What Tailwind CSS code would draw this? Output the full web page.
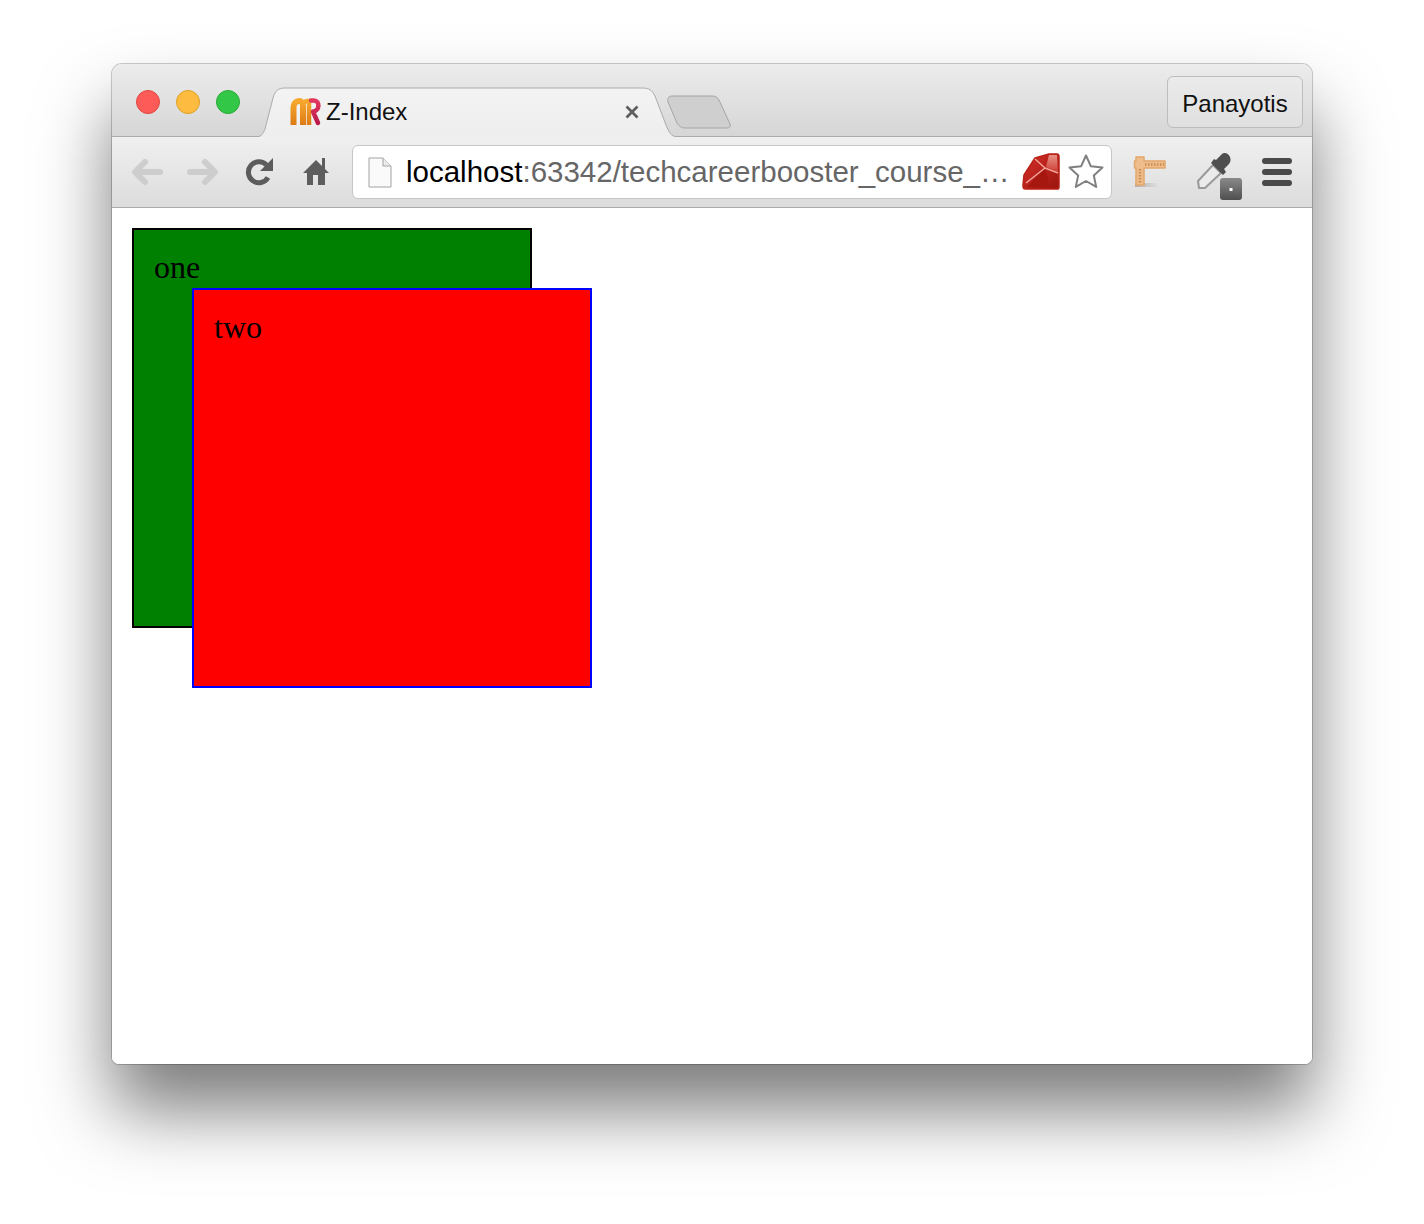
<!DOCTYPE html>
<html>
<head>
<meta charset="utf-8">
<title>Z-Index</title>
<script src="https://cdn.jsdelivr.net/npm/@tailwindcss/browser@4"></script>
</head>
<body class="bg-white">
<div class="w-[1424px] h-[1224px] pt-[64px] pl-[112px] overflow-hidden bg-white font-['Liberation_Sans',sans-serif]">
  <div class="w-[1200px] h-[1000px] flex flex-col rounded-t-[10px] rounded-b-[7px] bg-white shadow-[0_0_0_1px_rgba(0,0,0,0.2),0_46px_72px_rgba(0,0,0,0.52)]">
    <!-- tab strip -->
    <div class="relative h-[73px] shrink-0 flex items-end rounded-t-[10px] border-b border-[#ababab] bg-gradient-to-b from-[#ececec] to-[#d6d6d6]">
      <div class="w-[146px] h-full flex items-center gap-4 pl-6 pt-[4px] self-start">
        <span class="w-6 h-6 rounded-full bg-[#fc5b57] border border-[#e2463f]"></span>
        <span class="w-6 h-6 rounded-full bg-[#fdbb40] border border-[#dfa023]"></span>
        <span class="w-6 h-6 rounded-full bg-[#33c748] border border-[#27aa35]"></span>
      </div>
      <div class="relative w-[418px] h-[50px] -mb-px shrink-0 flex items-center">
        <svg class="absolute inset-0" width="418" height="50" viewBox="0 0 418 50">
          <defs><linearGradient id="tabg" x1="0" y1="0" x2="0" y2="1"><stop offset="0" stop-color="#f3f3f3"/><stop offset="1" stop-color="#eeeeee"/></linearGradient></defs>
          <path d="M0 49.500 C3 49.500 5 47 7 42 L15 11 C17 4 20 1 27 1 L384 1 C391 1 394 3 397 9 L408 38 C411 46 414 49.500 418 49.500 L418 50 L0 50 Z" fill="url(#tabg)"/>
          <path d="M0 49.500 C3 49.500 5 47 7 42 L15 11 C17 4 20 1 27 1 L384 1 C391 1 394 3 397 9 L408 38 C411 46 414 49.500 418 49.500" fill="none" stroke="#ababab" stroke-width="1"/>
        </svg>
        <!-- logo -->
        <svg class="relative ml-[32px] mt-[-1px] shrink-0" width="32" height="30" viewBox="0 0 32 30">
          <defs>
            <linearGradient id="mo" x1="0" y1="0" x2="0" y2="1"><stop offset="0" stop-color="#f6a92e"/><stop offset="1" stop-color="#dd7a14"/></linearGradient>
            <linearGradient id="mr" x1="0" y1="0" x2="0" y2="1"><stop offset="0" stop-color="#e2395e"/><stop offset="1" stop-color="#bb1a4a"/></linearGradient>
          </defs>
          <path d="M3.500 28 V11 C3.500 6 6 4 9 4 C12 4 13 6 13 10 V28" fill="none" stroke="url(#mo)" stroke-width="6"/>
          <path d="M13 10 C13 6 15 4 17.500 4 L19 4 V28" fill="none" stroke="url(#mo)" stroke-width="4.500"/>
          <path d="M21 3.500 H24 C30 3.500 30 14 23 14.500 L28 26" fill="none" stroke="url(#mr)" stroke-width="4.500" stroke-linecap="round" stroke-linejoin="round"/>
        </svg>
        <span class="relative ml-[4px] mt-[0px] text-[24px] leading-[28px] text-[#111]">Z-Index</span>
        <svg class="absolute left-[367px] top-[18px]" width="14" height="14" viewBox="0 0 14 14"><path d="M1.500 1.500 L12.500 12.500 M12.500 1.500 L1.500 12.500" stroke="#5f5f5f" stroke-width="2.800"/></svg>
      </div>
      <svg class="-ml-[10px] mb-[7px] shrink-0" width="66" height="34" viewBox="0 0 66 34">
        <path d="M6 1 H46 C50 1 52 3 53 5 L64 29 C65 32 63 33 61 33 H19 C15 33 13 31 11 28 L2 7 C1 3 3 1 6 1 Z" fill="#cfcfd0" stroke="#a6a6a6" stroke-width="1"/>
      </svg>
      <div class="ml-auto mr-[9px] mb-[8px] w-[136px] h-[52px] pt-[3px] rounded-[6px] border border-[#bdbdbd] bg-gradient-to-b from-[#ebebeb] to-[#e0e0e0] flex items-center justify-center text-[24px] text-[#111]">Panayotis</div>
    </div>
    <!-- toolbar -->
    <div class="h-[71px] shrink-0 flex items-center border-b border-[#ababab] bg-gradient-to-b from-[#f0f0f0] to-[#dcdcdc]">
      <svg class="ml-[18px] shrink-0" width="38" height="34" viewBox="0 0 38 34"><path d="M30 17 H7 M15 7 L5 17 L15 27" fill="none" stroke="#cdcdcd" stroke-width="6" stroke-linecap="round" stroke-linejoin="round"/></svg>
      <svg class="ml-[17px] shrink-0" width="38" height="34" viewBox="0 0 38 34"><path d="M5 17 H28 M20 7 L30 17 L20 27" fill="none" stroke="#cdcdcd" stroke-width="6" stroke-linecap="round" stroke-linejoin="round"/></svg>
      <svg class="ml-[21px] shrink-0" width="32" height="32" viewBox="0 0 32 32"><path d="M24 21.500 A10.500 10.500 0 1 1 22.500 9" fill="none" stroke="#5c5c5c" stroke-width="5"/><path d="M29 2 V15 H16 Z" fill="#5c5c5c"/></svg>
      <svg class="ml-[26px] shrink-0" width="30" height="30" viewBox="0 0 30 30"><path d="M14 3 L20 9 V1 H23 V12 L27 16 H23 V28 H16 V18 H11 V28 H5 V16 H1 Z" fill="#5d5d5d"/></svg>
      <!-- address bar -->
      <div class="ml-[20px] w-[760px] h-[54px] shrink-0 rounded-[6px] border border-[#c6c6c6] bg-white flex items-center">
        <svg class="ml-[15px] shrink-0" width="24" height="31" viewBox="0 0 24 31"><path d="M1 1 H15 L23 9 V30 H1 Z" fill="#fafafa" stroke="#a3a3a3"/><path d="M15 1 V9 H23" fill="#ebebeb" stroke="#a3a3a3"/></svg>
        <span class="ml-[14px] w-[604px] shrink-0 whitespace-nowrap text-[29.5px] leading-[34px] text-[#666]"><span class="text-black">localhost</span>:63342/techcareerbooster_course_…</span>
        <svg class="ml-[11px] shrink-0" width="40" height="40" viewBox="0 0 40 40">
          <defs>
            <linearGradient id="rb" x1="0" y1="0" x2="1" y2="1"><stop offset="0" stop-color="#d6302a"/><stop offset="1" stop-color="#9a150d"/></linearGradient>
            <linearGradient id="rh" x1="0" y1="0" x2="0" y2="1"><stop offset="0" stop-color="#f6b6ac"/><stop offset="1" stop-color="#d9483c"/></linearGradient>
          </defs>
          <path d="M14 6 L28 2 H36 C38 2 38 3 38 5 V34 C38 37 38 37 35 37 H5 C2 37 2 36 2 33 L3 23 Z" fill="url(#rb)" stroke="#b92118" stroke-width="1.500" stroke-linejoin="round"/>
          <path d="M28 3 L36 3 L37 20 L25 15 Z" fill="url(#rh)" opacity="0.75"/>
          <path d="M24 16 L29 36 L6 35 Z" fill="#a5170f"/>
          <path d="M24 16 L5 31 M14 7 L24 16 M24 16 L37 21" fill="none" stroke="#f3a49a" stroke-width="1.500"/>
        </svg>
        <svg class="ml-[6px] shrink-0" width="38" height="38" viewBox="0 0 38 38"><path d="M19 2.500 L23.800 13.200 L35.500 14.500 L26.800 22.400 L29.200 33.900 L19 28 L8.800 33.900 L11.200 22.400 L2.500 14.500 L14.200 13.200 Z" fill="#fff" stroke="#7f7f7f" stroke-width="2" stroke-linejoin="round"/></svg>
      </div>
      <svg class="ml-[19px] shrink-0" width="38" height="34" viewBox="0 0 38 34">
        <defs>
          <linearGradient id="sh" x1="0" y1="0" x2="1" y2="0"><stop offset="0" stop-color="#999" stop-opacity="0.7"/><stop offset="1" stop-color="#999" stop-opacity="0"/></linearGradient>
        </defs>
        <rect x="4" y="28" width="24" height="4" fill="url(#sh)"/>
        <path d="M5 2 H13 V6 H34 V13 H13 V30 H5 V13 H3.500 V6 H5 Z" fill="#eebd8b" stroke="#e5a76c" stroke-width="1.500" stroke-linejoin="round"/>
        <path d="M14 9.500 H33 M9 14 V29" stroke="#c98b52" stroke-width="2.500" stroke-dasharray="1.500 1.500" fill="none"/>
      </svg>
      <svg class="ml-[27px] shrink-0" width="50" height="56" viewBox="0 0 50 56">
        <defs><linearGradient id="bx" x1="0" y1="0" x2="0" y2="1"><stop offset="0" stop-color="#8a8a8a"/><stop offset="1" stop-color="#4f4f4f"/></linearGradient></defs>
        <path d="M2 37 L17 21 L25 29 L9 44 L3 44 Z" fill="#ebebeb" stroke="#9a9a9a" stroke-width="2" stroke-linejoin="round"/>
        <path d="M15 19 L27 31 L30 28 L28 25 L33 20 C38 14 30 5 25 11 L20 16 L18 15 Z" fill="#4f4f4f"/>
        <rect x="24" y="34" width="22" height="22" rx="3" fill="url(#bx)"/>
        <rect x="33.500" y="44" width="3" height="3" fill="#fff"/>
      </svg>
      <div class="ml-[16px] w-[30px] shrink-0 flex flex-col gap-[5px]">
        <span class="block h-[6px] rounded-full bg-[#4a4a4a]"></span>
        <span class="block h-[6px] rounded-full bg-[#4a4a4a]"></span>
        <span class="block h-[6px] rounded-full bg-[#4a4a4a]"></span>
      </div>
    </div>
    <!-- page -->
    <div class="relative flex-1 rounded-b-[7px] bg-white p-[20px] font-['Liberation_Serif',serif] text-[32px] leading-[34px] text-black">
      <div class="w-[400px] h-[400px] border-2 border-black bg-[#008000] p-[20px]">one</div>
      <div class="absolute left-[80px] top-[80px] w-[400px] h-[400px] border-2 border-[#0000ff] bg-[#ff0000] p-[20px]">two</div>
    </div>
  </div>
</div>
</body>
</html>
